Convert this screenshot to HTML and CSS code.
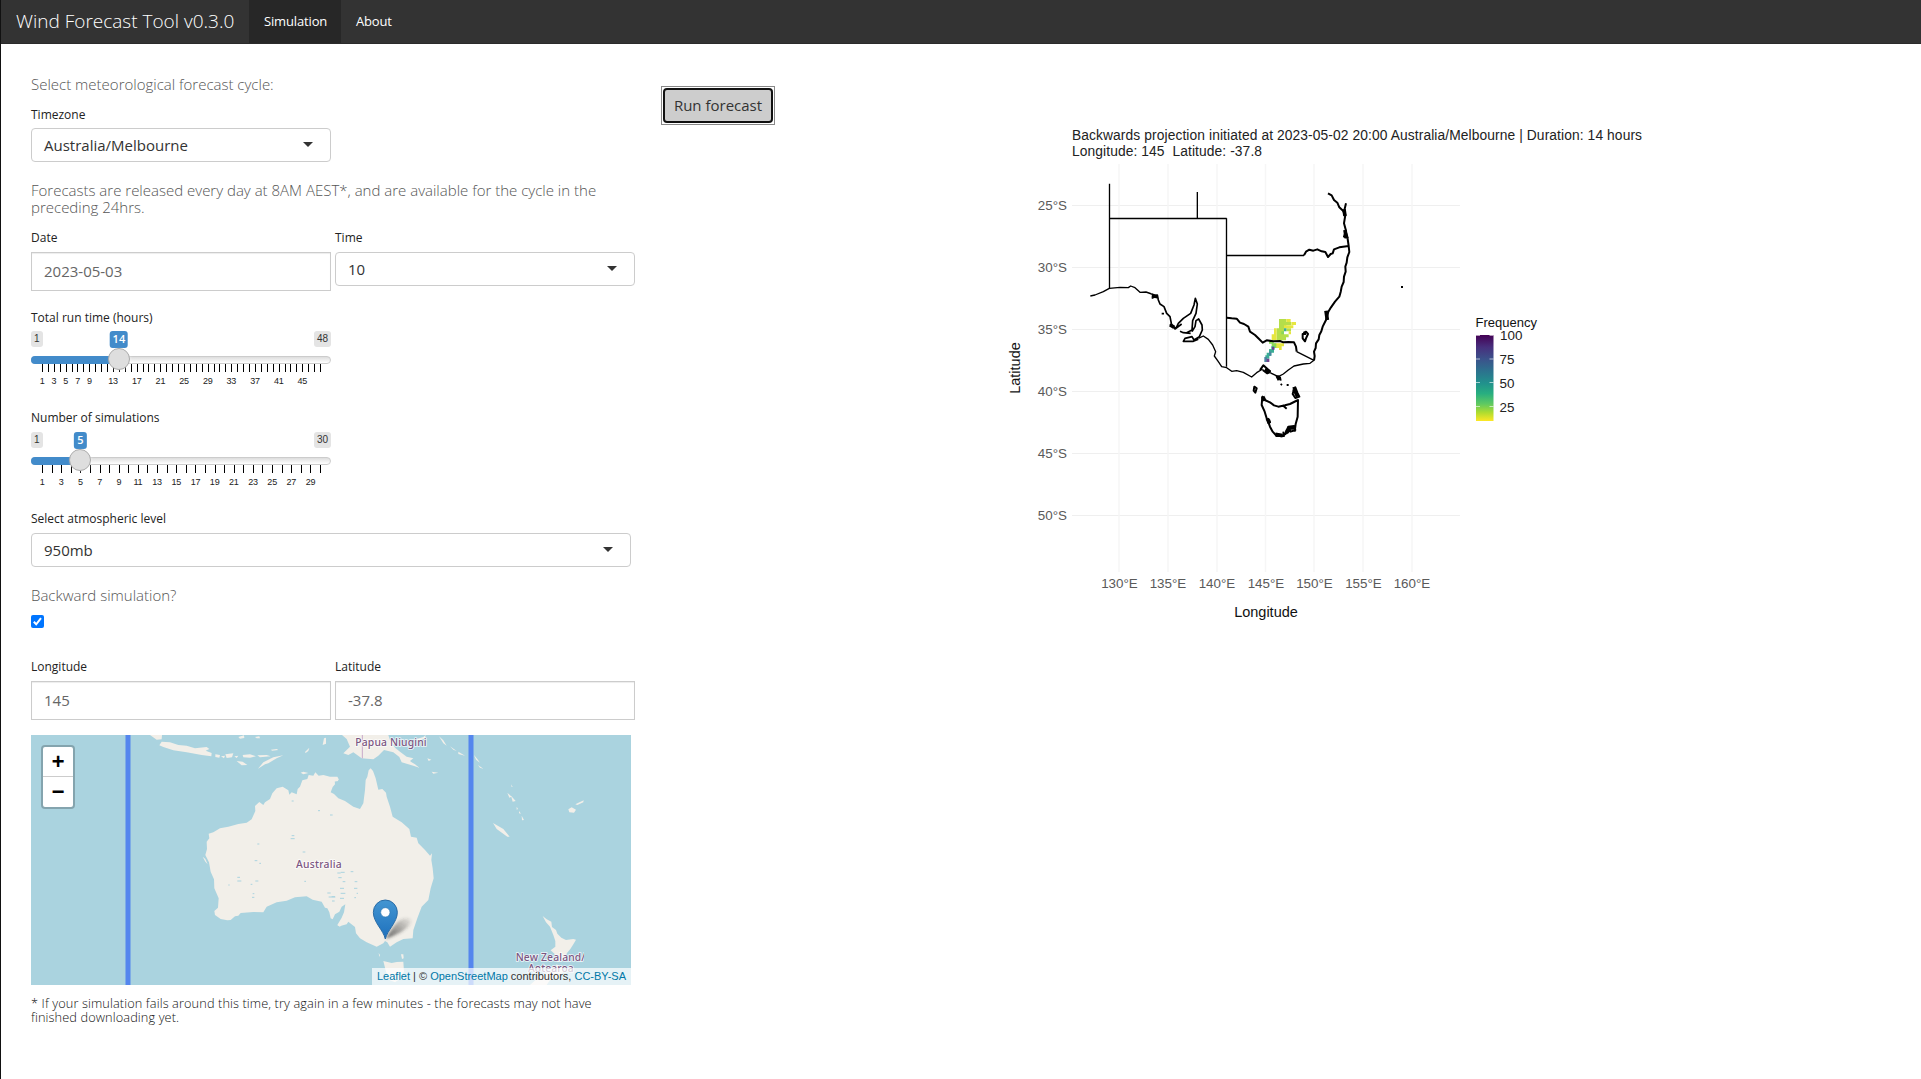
FILE: index.html
```html
<!DOCTYPE html>
<html lang="en">
<head>
<meta charset="utf-8">
<title>Wind Forecast Tool</title>
<link rel="stylesheet" href="styles.css">
</head>
<body>
<nav class="navbar">
  <a class="brand">Wind Forecast Tool v0.3.0</a>
  <a class="tab active">Simulation</a>
  <a class="tab">About</a>
</nav>
<main class="page">
  <section class="controls">
    <h4 class="lead cycle">Select meteorological forecast cycle:</h4>
    <div class="field tz">
      <label>Timezone</label>
      <div class="select">Australia/Melbourne<i class="caret"></i></div>
    </div>
    <h4 class="lead note">Forecasts are released every day at 8AM AEST*, and are available for the cycle in the preceding 24hrs.</h4>
    <div class="pair dates">
      <div class="field"><label>Date</label><div class="input">2023-05-03</div></div>
      <div class="field"><label>Time</label><div class="select">10<i class="caret"></i></div></div>
    </div>
    <div class="field slider-field">
      <label>Total run time (hours)</label>
      <div class="slider" data-max="48" data-value="14" data-labels="1,3,5,7,9,13,17,21,25,29,33,37,41,45"></div>
    </div>
    <div class="field slider-field second">
      <label>Number of simulations</label>
      <div class="slider" data-max="30" data-value="5" data-labels="1,3,5,7,9,11,13,15,17,19,21,23,25,27,29"></div>
    </div>
    <div class="field level">
      <label>Select atmospheric level</label>
      <div class="select">950mb<i class="caret"></i></div>
    </div>
    <h4 class="lead back">Backward simulation?</h4>
    <svg class="check" viewBox="0 0 13 13"><rect width="13" height="13" rx="2" fill="#0075ff"/><path d="M2.8 6.8 5.2 9.3 10 3.2" fill="none" stroke="#fff" stroke-width="2"/></svg>
    <div class="pair coords">
      <div class="field"><label>Longitude</label><div class="input">145</div></div>
      <div class="field"><label>Latitude</label><div class="input">-37.8</div></div>
    </div>
    <div class="map">
      <svg class="tiles" viewBox="33 30 1800 750">
        <defs>
          <linearGradient id="pin" x1="0" y1="0" x2="0" y2="1"><stop offset="0" stop-color="#4496d2"/><stop offset="1" stop-color="#1d70bd"/></linearGradient>
          <linearGradient id="shade" x1="0" y1="1" x2="1" y2="0"><stop offset="0" stop-color="#333" stop-opacity=".75"/><stop offset="1" stop-color="#333" stop-opacity=".05"/></linearGradient>
          <filter id="soft" x="-30%" y="-30%" width="160%" height="160%"><feGaussianBlur stdDeviation="5"/></filter>
          <clipPath id="tileEdge"><path d="M33 30H1692V780H33Z"/></clipPath>
        </defs>
        <g class="land">
          <path d="M566 326 568 340 560 350 561 372 556 390 567 412 572 440 582 463 583 490 596 520 594 548 583 558 585 570 602 582 622 586 632 585 645 574 655 572 662 564 700 561 730 562 740 545 770 532 800 527 825 517 860 514 878 524 905 530 915 548 922 550 928 562 932 580 938 583 945 568 958 560 965 545 976 538 972 562 965 578 952 600 958 604 980 598 985 590 1005 606 1008 625 1020 640 1040 652 1070 665 1090 655 1095 648 1102 652 1110 665 1130 652 1150 642 1178 640 1180 615 1192 580 1205 545 1225 525 1232 490 1241 460 1238 430 1234 405 1236 385 1230 392 1215 375 1195 355 1190 338 1173 335 1168 312 1145 292 1118 275 1110 245 1100 215 1098 203 1087 192 1075 194 1067 160 1059 138 1052 130 1046 136 1042 155 1037 165 1035 195 1030 235 1020 252 1000 245 975 228 955 220 942 207 932 202 938 186 945 178 944 166 957 164 952 155 930 155 910 150 896 152 886 142 880 152 866 150 862 162 847 166 840 185 833 192 830 208 815 202 808 209 805 196 788 185 770 190 757 205 750 222 735 232 730 240 718 231 705 243 706 258 695 283 680 293 655 297 625 305 600 310 580 322Z"/>
          <path d="M842 143 850 140 865 144 850 148ZM935 158 950 156 955 168 940 170ZM952 600 965 599 960 605ZM548 395 556 410 563 418 556 402Z"/>
          <path d="M390 30 426 30 425 43 410 44ZM425 50 450 52 475 60 500 62 525 70 560 66 568 72 557 77 575 84 574 94 545 90 500 82 460 76 430 66 418 61ZM586 88 600 90 598 98 586 96ZM603 94 615 92 612 100ZM616 88 640 85 636 97 620 99ZM643 94 655 92 650 99ZM668 90 690 88 708 94 690 98 670 97ZM712 91 740 90 752 94 720 97ZM650 108 668 110 682 120 665 121ZM714 131 730 112 760 97 790 91 770 100 745 115 735 118ZM753 74 770 72 775 75 756 77ZM855 81 868 68 865 78 857 84ZM908 60 912 40 918 38 918 56ZM655 36 672 31 673 39 660 41ZM705 36 718 34 720 40 710 40Z"/>
          <path d="M966 30 980 42 990 65 970 85 985 90 1000 82 1025 100 1060 103 1075 92 1092 75 1120 82 1138 96 1145 112 1180 122 1198 128 1185 118 1175 112 1170 108 1180 100 1160 95 1140 80 1125 68 1120 60 1125 52 1110 45 1105 30ZM1194 48 1215 40 1217 30 1210 36 1190 42ZM1257 34 1270 46 1280 62 1270 55ZM1290 64 1310 78 1300 74ZM1315 80 1335 92 1315 87ZM1362 90 1372 102 1380 113 1368 104ZM1374 120 1390 131 1380 128ZM1222 100 1234 104 1226 108ZM1235 140 1255 143 1240 146Z"/>
          <path d="M1419 294 1450 312 1469 335 1462 335 1430 312ZM1462 203 1475 215 1468 218ZM1473 212 1487 228 1478 230ZM1490 245 1494 252 1490 254ZM1497 258 1503 266 1497 265ZM1505 272 1512 285 1506 286ZM1645 253 1655 247 1668 254 1662 263 1648 262ZM1666 238 1691 226 1690 232 1672 240ZM1450 129 1456 132ZM1473 178 1478 186 1475 186Z"/>
          <path d="M1568 573 1580 583 1594 590 1596 606 1608 615 1612 626 1624 638 1638 645 1660 642 1668 644 1661 656 1651 672 1641 684 1632 704 1612 712 1612 700 1605 688 1600 683 1592 676 1606 665 1606 648 1600 630 1590 605 1578 592ZM1600 735 1570 748 1550 762 1530 780H1580L1590 765 1620 755 1634 735 1610 718ZM1090 708 1115 714 1130 711 1150 710 1152 740 1140 762 1125 772 1110 766 1098 740ZM1143 688 1150 688 1151 700 1146 702ZM1076 684 1080 690 1078 696Z"/>
        </g>
        <g class="lakes">
          <path d="M812 341h12M815 332h8M894 257h6M930 270h8M712 357h6M815 228h6M848 381h8M704 407h8M718 415h5M652 457h8M652 468h12M625 480h4M698 506h5M696 517h7M692 478h5M706 468h9M853 469h5M922 504h10M926 516h20M936 528h8M952 444h10M955 458h10M962 442h12M960 490h12M962 505h14M935 515h10M960 520h12M1004 470h8M1002 490h10M992 440h8M968 470h8M1010 505h4M1003 518h5"/>
        </g>
        <path class="frontier" d="M1027 30V100"/>
        <g class="names" clip-path="url(#tileEdge)">
          <text x="1006" y="64" textLength="214">Papua Niugini</text>
          <text x="828" y="430" textLength="137">Australia</text>
          <text x="1487" y="707" textLength="209">New Zealand/</text>
          <text x="1524" y="742" textLength="137">Aotearoa</text>
        </g>
        <path class="bounds" d="M324 30V780M1353 30V780"/>
        <path d="M1097 641C1115 615 1130 580 1160 580S1168 620 1097 641Z" fill="url(#shade)" filter="url(#soft)"/>
        <path d="M1096 642C1090 615 1060 592 1060 562A36 37 0 0 1 1132 562C1132 592 1102 615 1096 642Z" fill="url(#pin)" stroke="#2a6ca6" stroke-width="3"/>
        <circle cx="1096" cy="562" r="14" fill="#fff" stroke="#2f77b0" stroke-width="2"/>
      </svg>
      <div class="zoom"><span>+</span><span>−</span></div>
      <div class="credit"><a>Leaflet</a> | © <a>OpenStreetMap</a> contributors, <a>CC-BY-SA</a></div>
    </div>
    <p class="footnote">* If your simulation fails around this time, try again in a few minutes - the forecasts may not have finished downloading yet.</p>
  </section>
  <section class="results">
    <div class="focus-ring"><button class="run">Run forecast</button></div>
    <svg class="plot" viewBox="1000 120 660 510">
      <defs>
        <linearGradient id="viridis" x1="0" y1="0" x2="0" y2="1">
          <stop offset="0" stop-color="#440154"/><stop offset=".14" stop-color="#472f7d"/><stop offset=".28" stop-color="#3b528b"/><stop offset=".42" stop-color="#2c728e"/><stop offset=".56" stop-color="#21918c"/><stop offset=".68" stop-color="#28ae80"/><stop offset=".8" stop-color="#5ec962"/><stop offset=".9" stop-color="#addc30"/><stop offset="1" stop-color="#fde725"/>
        </linearGradient>
      </defs>
      <g class="title"><text x="1072" y="140" textLength="570">Backwards projection initiated at 2023-05-02 20:00 Australia/Melbourne | Duration: 14 hours</text><text x="1072" y="156" textLength="190" xml:space="preserve">Longitude: 145  Latitude: -37.8</text></g>
      <path class="grid-h" d="M1072 205.5H1460M1072 267.5H1460M1072 329.5H1460M1072 391.5H1460M1072 453.5H1460M1072 515.5H1460"/>
      <path class="grid-v" d="M1119 164V572M1168 164V572M1217 164V572M1265.5 164V572M1314 164V572M1363 164V572M1412 164V572"/>
      <g class="ticks end"><text x="1067" y="210">25°S</text><text x="1067" y="272">30°S</text><text x="1067" y="334">35°S</text><text x="1067" y="396">40°S</text><text x="1067" y="458">45°S</text><text x="1067" y="519.5">50°S</text></g>
      <g class="ticks mid"><text x="1119.5" y="587.5">130°E</text><text x="1168" y="587.5">135°E</text><text x="1217" y="587.5">140°E</text><text x="1266" y="587.5">145°E</text><text x="1314.5" y="587.5">150°E</text><text x="1363.5" y="587.5">155°E</text><text x="1412" y="587.5">160°E</text></g>
      <g class="axis mid"><text x="1266" y="616.5">Longitude</text><text transform="translate(1019.5 368) rotate(-90)">Latitude</text></g>
      <g transform="translate(1070 170) scale(.33333)">
        <g class="cells">
          <path fill="#b5de4a" d="M627 447h22v28h-22ZM649 456h14v10h-14ZM620 475h22v36h-22ZM649 475h14v9h-14ZM642 493h14v9h-14ZM634 502h14v9h-14Z"/>
          <path fill="#e6e640" d="M649 447h13v9h-13ZM664 456h14v9h-14ZM642 466h14v9h-14ZM612 475h8v36h-8ZM605 493h7v18h-7ZM656 466h14v9h-14ZM656 484h7v9h-7ZM627 520h8v20h-8ZM634 520h8v9h-8ZM612 520h15v14h-15Z"/>
          <path fill="#8bd65a" d="M605 520h14v14h-14ZM597 512h14v9h-14ZM634 484h8v9h-8ZM597 538h7v9h-7Z"/>
          <path fill="#3aae96" d="M597 538h15v10h-15ZM604 529h8v9h-8ZM590 548h14v9h-14ZM586 556h12v10h-12ZM642 475h7v9h-7Z"/>
          <path fill="#4a85a0" d="M583 561h8v15h-8ZM597 545h7v12h-7ZM608 530h6v9h-6Z"/>
          <path fill="#70408e" d="M590 566h8v10h-8ZM606 531h6v8h-6Z"/>
        </g>
        <g class="states">
          <path d="M118.5 41V355M118 145.5H470M382 66V145M469.5 145V590M470 256.5H702"/>
        </g>
        <g class="coast">
          <path stroke-width="4" d="M61 378 75 375 100 365 118 355 150 352 175 353 182 348 195 353 210 367 228 366 245 372M385 505 400 498 415 508 428 525 437 545 433 558 445 575 455 590 470 593 485 604 500 602 520 607 545 621 560 608 578 597M600 608 625 620 640 612 655 600 672 588 700 582 720 580 732 571M680 545 732 571"/>
          <path stroke-width="5" d="M245 372 252 378 262 375 265 390 270 402 282 410 290 430 300 440 305 465 318 475 325 460 340 445 362 430 372 405 376 385 382 402 378 430 368 452 366 480 350 488M366 485 375 470 378 452 386 447 396 465 397 480 388 500 372 510 366 500 345 505 340 514 370 514 385 508M245 385 262 378M275 431 282 431M300 462 315 477 335 462M330 484 340 488 362 490"/>
          <path stroke-width="6" d="M470 443 485 445 500 446 510 458 522 462 535 470 540 485 555 495 565 505 578 518 590 511 610 514 630 513 640 517 655 516 672 517 678 530 680 545"/>
          <path stroke-width="6" d="M702 256 708 245 718 239 730 242 742 238 755 244 766 246 774 261 782 252 788 250 792 238 808 232 836 228M774 70 785 76 792 90 802 98 808 112 822 125 828 100M818 120 826 135 822 160 828 182 822 200 836 205M826 182 832 200 836 228 838 246 832 262 830 278 826 290 827 305 822 320 821 336 815 350 812 366 808 380 795 395 783 412 775 425 768 450 758 470 754 484 748 495 746 508 738 520 737 534 732 545 734 558 732 572"/>
          <path stroke-width="6" d="M700 489 708 485 714 492 708 505 705 514 698 505 698 492 708 492M570 600 580 586 590 595 600 604 592 610 578 600M618 618 630 622 632 632M632 645 636 642M650 645 656 645M553 650 560 655 556 668 551 662Z"/>
          <path stroke-width="6" d="M668 655 676 652 682 668 688 680 676 684 668 672 672 658M576 678 584 690 600 697 612 706 625 710 645 706 660 702 684 690M638 706 650 716M577 680 575 705 584 725 590 745 600 757 597 748M592 748 600 770 608 785 620 798 642 798 640 785M645 795 650 780 662 785 676 780 672 768 655 770 650 790 662 778M684 688 683 740 677 762 674 785"/>
          <path stroke-width="11" d="M578 680 584 692M672 657 683 680M616 793 638 797M650 788 656 774 674 774M584 600 600 606M768 422 772 450M825 180 829 205M822 118 825 138M622 618 628 630M300 464 312 472M246 376 262 380M592 745 598 760"/>
        </g>
      </g>
      <path d="M1401 286h2v2h-2z"/>
      <text class="legend-title" x="1475.5" y="327">Frequency</text>
      <rect x="1476" y="335" width="17.5" height="86" fill="url(#viridis)"/>
      <path d="M1476 335.5h4M1489.5 335.5h4M1476 359h4M1489.5 359h4M1476 382.5h4M1489.5 382.5h4M1476 406.5h4M1489.5 406.5h4" stroke="#fff" stroke-opacity=".6"/>
      <g class="keys"><text x="1500" y="340">100</text><text x="1499.5" y="364">75</text><text x="1499.5" y="388">50</text><text x="1499.5" y="411.5">25</text></g>
    </svg>
  </section>
</main>
<script src="script.js"></script>
</body>
</html>
```
FILE: styles.css
```css
* { box-sizing: border-box; }
body { margin: 0; min-height: 1079px; border-left: 1px solid #111; background: #fff; color: #222; font-family: "Open Sans", sans-serif; font-size: 15px; overflow: hidden; }
.navbar { display: flex; height: 44px; background: #333; color: #fff; border-bottom: 1px solid #2b2b2b; }
.brand { width: 248px; padding-left: 15px; font-size: 19px; font-weight: 320; line-height: 42px; white-space: nowrap; }
.tab { padding: 0 15px; font-size: 13px; font-weight: 400; line-height: 43px; letter-spacing: -.15px; }
.tab.active { width: 92px; background: #272727; }
.page { display: flex; padding-left: 30px; }
.controls { width: 604px; flex: none; }
.lead { margin: 0; font-size: 15px; font-weight: 300; line-height: 17px; color: #555; }
.cycle { margin-top: 32px; }
.field { width: 300px; }
label { display: block; height: 18px; font-size: 12px; line-height: 18px; }
.tz { margin-top: 13px; }
.select { display: flex; justify-content: space-between; align-items: center; height: 34px; margin-top: 4px; padding: 0 17px 0 12px; border: 1px solid #ccc; border-radius: 4px; color: #333; }
.caret { width: 0; border: 5px solid transparent; border-top-color: #333; border-bottom: 0; margin-top: -2px; }
.note { width: 590px; margin-top: 20px; }
.pair { display: flex; gap: 4px; }
.dates { margin-top: 13px; }
.dates .select { margin-top: 5px; }
.input { height: 39px; margin-top: 5px; padding: 0 12px; border: 1px solid #ccc; box-shadow: inset 0 1px 1px rgba(0,0,0,.075); line-height: 37px; color: #666; }
.slider-field { height: 100px; }
.dates + .slider-field { margin-top: 18px; }
.slider-field.second .slider { margin-top: 5px; }
.slider { position: relative; width: 300px; height: 66px; margin-top: 4px; }
.slider > * { position: absolute; }
.bound, .value { top: 0; height: 16px; padding: 0 3px; border-radius: 3px; background: #e4e4e4; color: #333; font: 10px/16px "Liberation Sans", Arial, sans-serif; }
.bound.low { left: 0; width: 12px; }
.bound.high { right: 0; }
.value { height: 17px; background: #428bca; color: #fff; font-size: 11px; font-weight: 600; transform: translateX(-50%); font-family: "Open Sans", sans-serif; }
.bar { top: 25px; left: 0; width: 300px; height: 8px; border: 1px solid #ccc; border-radius: 8px; background: linear-gradient(#ddd, #fff); }
.fill { top: 25px; left: 0; height: 8px; border-radius: 8px 0 0 8px; background: #428bca; }
.handle { top: 17px; width: 22px; height: 22px; border: 1px solid #ababab; border-radius: 50%; background: #dedede; box-shadow: 1px 1px 3px rgba(255,255,255,.3); transform: translateX(-50%); z-index: 2; }
.tick { top: 33px; width: 1px; height: 8px; background: #000; }
.num { top: 44px; font: 9px/12px "Liberation Sans", Arial, sans-serif; color: #222; letter-spacing: -.2px; transform: translateX(-50%); }
.level { width: 600px; margin-top: 1px; }
.level .select { margin-top: 5px; }
.back { margin-top: 20px; }
.check { display: block; width: 13px; height: 13px; margin-top: 11px; }
.coords { margin-top: 30px; }
.map { position: relative; width: 600px; height: 250px; margin-top: 15px; background: #aad3df; overflow: hidden; }
.tiles { display: block; width: 600px; height: 250px; }
.land { fill: #f2efe9; }
.lakes { fill: none; stroke: #aad3df; stroke-width: 3; }
.frontier { stroke: #c9a9c9; stroke-width: 3; }
.bounds { stroke: #4a7df0; stroke-width: 15; stroke-opacity: .9; }
.names { fill: #7b5681; font: 500 31px "Noto Sans", sans-serif; stroke: #fff; stroke-opacity: .8; stroke-width: 5; paint-order: stroke; }
.zoom { position: absolute; left: 10px; top: 10px; width: 34px; height: 64px; border: 2px solid rgba(0,0,0,.22); border-radius: 4px; background: #fff; background-clip: padding-box; }
.zoom span { display: block; height: 30px; padding-top: 2px; text-align: center; font: bold 22px/30px "Liberation Mono", monospace; color: #000; }
.zoom span:first-child { border-bottom: 1px solid #ccc; }
.credit { position: absolute; right: 0; bottom: 0; padding: 0 5px; background: rgba(255,255,255,.7); color: #333; font: 11px/17px "Liberation Sans", Arial, sans-serif; white-space: nowrap; }
.credit a { color: #0078a8; }
.footnote { width: 590px; margin: 11px 0 0; font-size: 12.75px; letter-spacing: .11px; font-weight: 300; line-height: 14px; color: #111; }
.results { display: flex; align-items: flex-start; }
.focus-ring { margin: 42px 0 0 26px; padding: 1px; border: 1px solid #888; }
.run { display: block; width: 110px; height: 35px; padding: 0 0 2px; border: 2px solid #111; border-radius: 4px; background: #cdcdcd; color: #333; font: 15px "Open Sans", sans-serif; }
.plot { width: 660px; height: 510px; margin: 76px 0 0 225px; font-family: "Liberation Sans", Arial, sans-serif; }
.title { font-size: 13.8px; fill: #222; }
.grid-h { stroke: #efefef; stroke-width: 1; }
.grid-v { stroke: #f6f6f6; stroke-width: 1.4; }
.ticks { font-size: 13.4px; fill: #5a5a5a; }
.end { text-anchor: end; }
.mid { text-anchor: middle; }
.axis { font-size: 14.5px; fill: #111; }
.states, .coast { fill: none; stroke: #000; stroke-width: 4; stroke-linejoin: round; }
.legend-title { font-size: 13px; fill: #111; }
.keys { font-size: 13.4px; fill: #222; }
```
FILE: script.js
```js
// Builds each range slider from its data attributes.
document.querySelectorAll('.slider').forEach(function (slider) {
  var max = +slider.dataset.max, value = +slider.dataset.value;
  function at(n) { return 11.5 + (n - 1) / (max - 1) * 278; }
  function add(cls, left, text) {
    var el = document.createElement('span');
    el.className = cls;
    if (left !== null) el.style.left = left + 'px';
    if (text) el.textContent = text;
    slider.appendChild(el);
    return el;
  }
  add('bound low', null, '1');
  add('bound high', null, max);
  add('bar', null);
  add('fill', null).style.width = at(value) + 'px';
  for (var n = 1; n <= max; n++) add('tick', at(n) - 0.5);
  slider.dataset.labels.split(',').forEach(function (n) { add('num', at(+n) - 0.4, n); });
  add('handle', at(value) - 0.5);
  add('value', at(value) - 0.5, value);
});
```
